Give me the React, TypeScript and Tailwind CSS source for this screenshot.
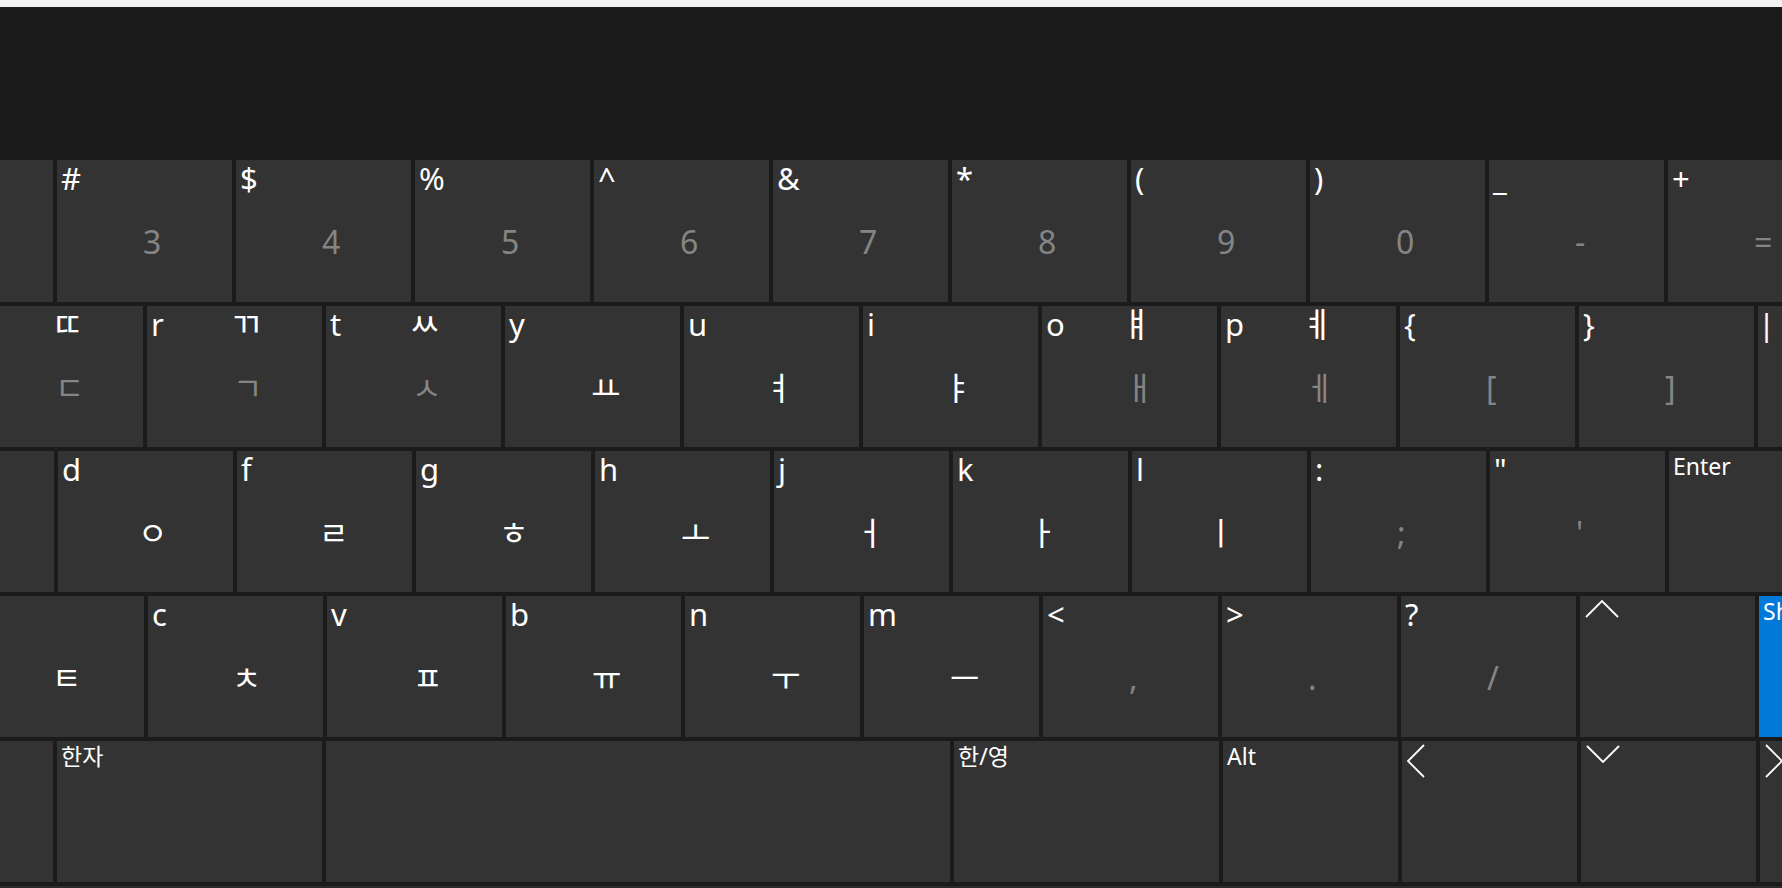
import React from "react";

type KeyProps = {
  w: string;
  tl?: React.ReactNode;
  size?: "letter" | "fn";
  tc?: string;
  bc?: string;
  dim?: boolean;
  split?: string;
  bg?: string;
  icon?: React.ReactNode;
};

const sizeCls: Record<string, string> = {
  letter: "text-[31px] pt-0",
  fn: "text-[23px] pt-[2px]",
};

// horizontal nudges so the jamo ink lines up the way the reference draws it
const nudge: Record<string, string> = {
  "ㅇ": "ml-[-6px]",
  "ㅕ": "ml-[-6px]",
  "ㅑ": "ml-[-6px]",
  "ㄹ": "ml-[-4px]",
  "ㅎ": "ml-[-3px]",
  "ㅓ": "ml-[-5px]",
  "ㅏ": "ml-[-11px]",
  "ㅣ": "ml-[-12px]",
  "ㅐ": "ml-[-3px]",
  "ㅔ": "ml-[-2px]",
  "ㅌ": "ml-[-3px]",
  "ㅊ": "ml-[-2px]",
};

const topNudge: Record<string, string> = {
  "ㄸ": "ml-[-3px]",
  "ㄲ": "ml-[-3px]",
  "ㅆ": "ml-[-3px]",
  "ㅒ": "ml-[-7px]",
  "ㅖ": "ml-[-5px]",
};

function Key({ w, tl, size = "letter", tc, bc, dim, split = "grid-cols-[86px_1fr]", bg = "bg-[#333333]", icon }: KeyProps) {
  return (
    <div className={`shrink-0 h-full text-white ${bg} ${w}`}>
      {icon ? (
        <div className="pl-[4px] pt-[3px]">{icon}</div>
      ) : (
        <div className={`grid ${split} grid-rows-[63px_1fr] h-full`}>
          <div className={`pl-[4px] leading-[1.2] whitespace-nowrap ${sizeCls[size]}`}>{tl}</div>
          <div className={`text-[34px] leading-[1.2] mt-[-2px] whitespace-nowrap ${tc ? topNudge[tc] ?? "" : ""}`}>{tc}</div>
          <div />
          <div
            className={`text-[32px] leading-[1.2] whitespace-nowrap ${bc ? nudge[bc] ?? "" : ""} ${
              dim ? "text-[#858585]" : "text-white"
            }`}
          >
            {bc}
          </div>
        </div>
      )}
    </div>
  );
}

function Row({ h, children }: { h: string; children: React.ReactNode }) {
  return <div className={`flex gap-[4px] shrink-0 ${h}`}>{children}</div>;
}

const K = "w-[175px]";

function Chevron({ dir }: { dir: "up" | "down" | "left" | "right" }) {
  if (dir === "up" || dir === "down") {
    const pts = dir === "up" ? "1,17 17,1 33,17" : "1,1 17,17 33,1";
    return (
      <svg width="34" height="18" viewBox="0 0 34 18" className="ml-[1px] mt-[1px]">
        <polyline points={pts} fill="none" stroke="#ffffff" strokeWidth="1.8" />
      </svg>
    );
  }
  const pts = dir === "left" ? "17,1 1,17 17,33" : "1,1 17,17 1,33";
  return (
    <svg width="18" height="34" viewBox="0 0 18 34" className="ml-[1px]">
      <polyline points={pts} fill="none" stroke="#ffffff" strokeWidth="1.8" />
    </svg>
  );
}

export default function App() {
  return (
    <div
      lang="ko"
      className="w-[1782px] h-[888px] overflow-hidden bg-[#1b1b1b] flex flex-col font-['Noto_Sans','Noto_Sans_CJK_KR',sans-serif]"
    >
      <div className="h-[7px] shrink-0 bg-[#f2f2f2]" />
      <div className="h-[153px] shrink-0 bg-[#1b1b1b]" />
      <div className="flex flex-col gap-[4px] h-[722px] shrink-0">
        <Row h="h-[142px]">
          <Key w="w-[53px]" />
          <Key w={K} tl="#" bc="3" dim />
          <Key w={K} tl="$" bc="4" dim />
          <Key w={K} tl="%" bc="5" dim />
          <Key w={K} tl="^" bc="6" dim />
          <Key w={K} tl="&" bc="7" dim />
          <Key w={K} tl="*" bc="8" dim />
          <Key w={K} tl="(" bc="9" dim />
          <Key w={K} tl=")" bc="0" dim />
          <Key w={K} tl="_" bc="-" dim />
          <Key w={K} tl="+" bc="=" dim />
        </Row>
        <Row h="h-[141px]">
          <Key w="w-[143px]" split="grid-cols-[55px_1fr]" tc="ㄸ" bc="ㄷ" dim />
          <Key w={K} tl="r" tc="ㄲ" bc="ㄱ" dim />
          <Key w={K} tl="t" tc="ㅆ" bc="ㅅ" dim />
          <Key w={K} tl="y" bc="ㅛ" />
          <Key w={K} tl="u" bc="ㅕ" />
          <Key w={K} tl="i" bc="ㅑ" />
          <Key w={K} tl="o" tc="ㅒ" bc="ㅐ" dim />
          <Key w={K} tl="p" tc="ㅖ" bc="ㅔ" dim />
          <Key w={K} tl="{" bc="[" dim />
          <Key w={K} tl="}" bc="]" dim />
          <Key w={K} tl={<span className="ml-[-4px]">|</span>} />
        </Row>
        <Row h="h-[141px]">
          <Key w="w-[54px]" />
          <Key w={K} tl="d" bc="ㅇ" />
          <Key w={K} tl="f" bc="ㄹ" />
          <Key w={K} tl="g" bc="ㅎ" />
          <Key w={K} tl="h" bc="ㅗ" />
          <Key w={K} tl="j" bc="ㅓ" />
          <Key w={K} tl="k" bc="ㅏ" />
          <Key w={K} tl="l" bc="ㅣ" />
          <Key w={K} tl=":" bc=";" dim />
          <Key w={K} tl={'"'} bc="'" dim />
          <Key w="w-[220px]" tl="Enter" size="fn" />
        </Row>
        <Row h="h-[141px]">
          <Key w="w-[144px]" split="grid-cols-[55px_1fr]" bc="ㅌ" />
          <Key w={K} tl="c" bc="ㅊ" />
          <Key w={K} tl="v" bc="ㅍ" />
          <Key w={K} tl="b" bc="ㅠ" />
          <Key w={K} tl="n" bc="ㅜ" />
          <Key w={K} tl="m" bc="ㅡ" />
          <Key w={K} tl="<" bc="," dim />
          <Key w={K} tl=">" bc="." dim />
          <Key w={K} tl="?" bc="/" dim />
          <Key w={K} icon={<Chevron dir="up" />} />
          <Key w={K} tl="Shift" size="fn" bg="bg-[#0078d7]" />
        </Row>
        <Row h="h-[141px]">
          <Key w="w-[53px]" />
          <Key w="w-[265px]" tl="한자" size="fn" />
          <Key w="w-[624px]" />
          <Key w="w-[265px]" tl="한/영" size="fn" />
          <Key w={K} tl="Alt" size="fn" />
          <Key w={K} icon={<Chevron dir="left" />} />
          <Key w={K} icon={<Chevron dir="down" />} />
          <Key w={K} icon={<Chevron dir="right" />} />
        </Row>
      </div>
      <div className="h-[4px] shrink-0 bg-[#1b1b1b]" />
      <div className="h-[2px] shrink-0 bg-[#2b2b2b]" />
    </div>
  );
}
